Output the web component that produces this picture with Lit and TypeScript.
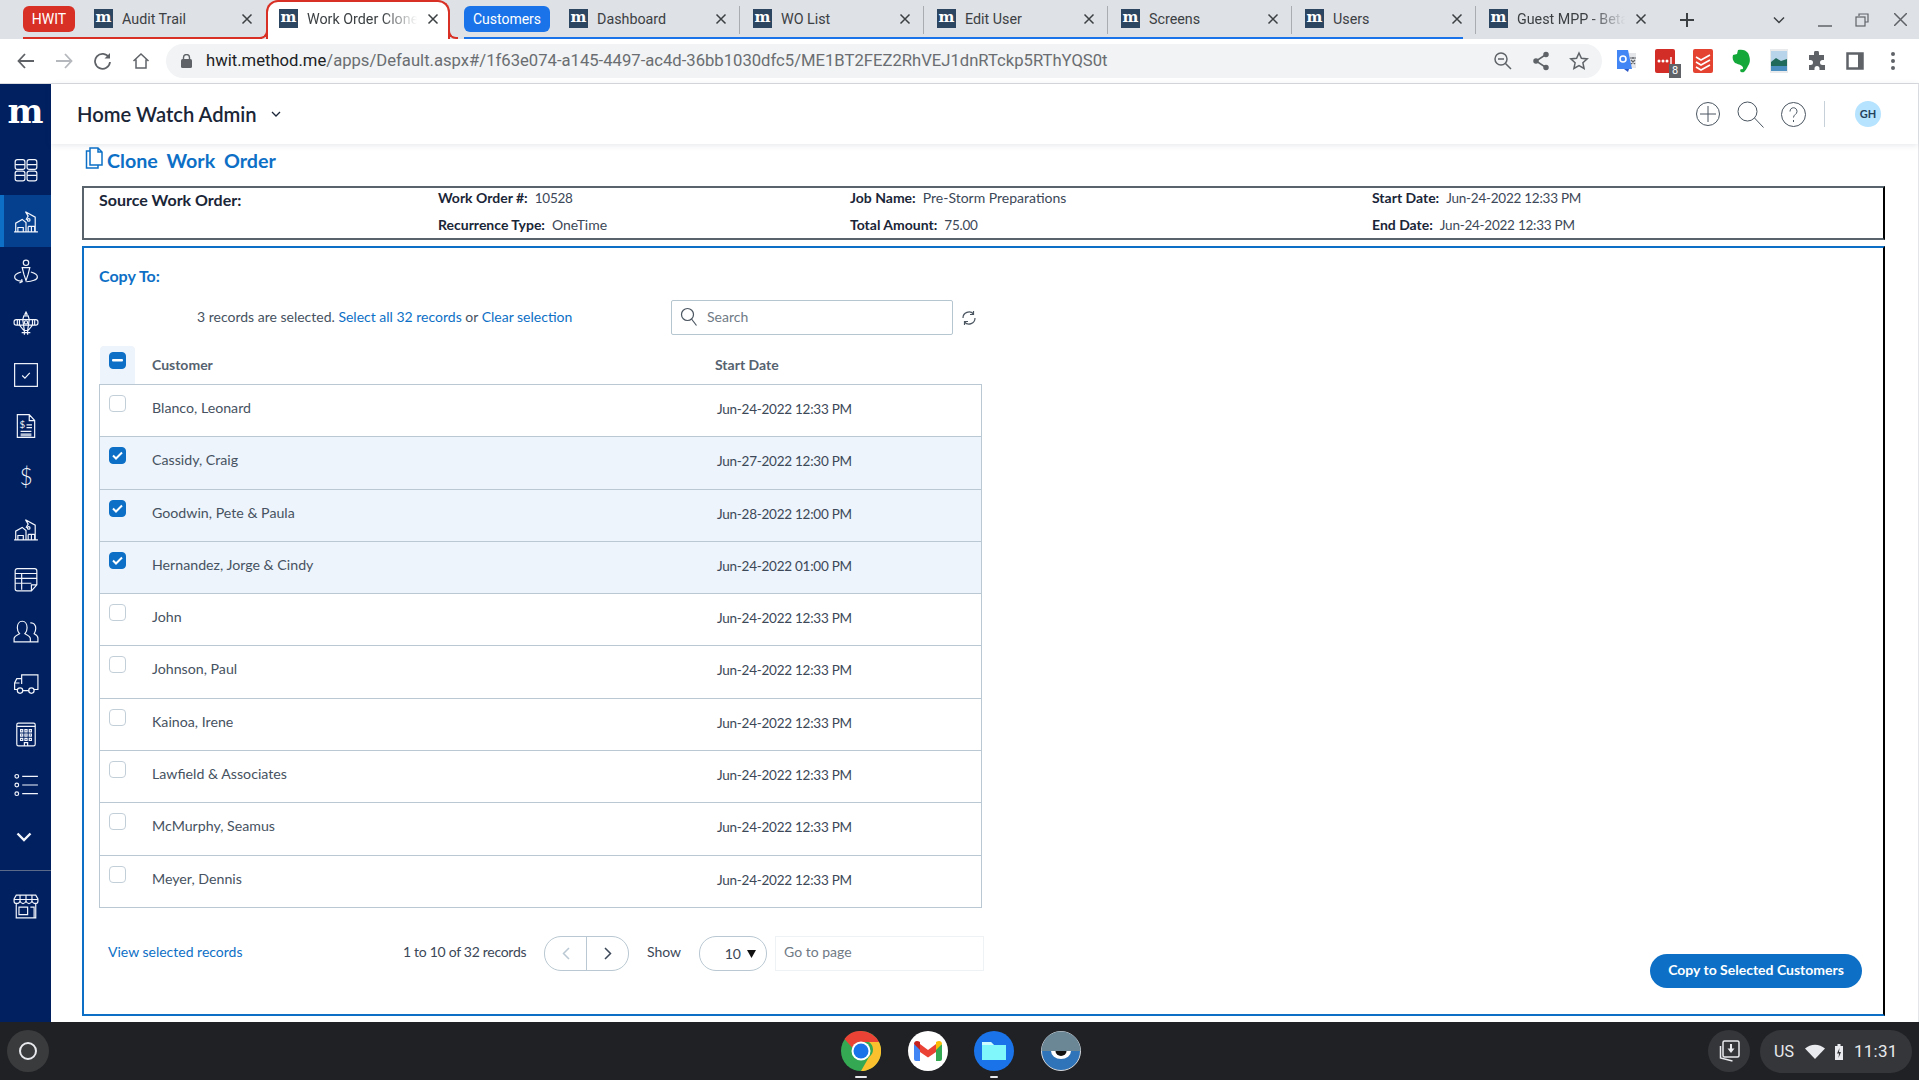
import { LitElement, html, css, svg } from 'lit';
import { customElement } from 'lit/decorators.js';
import { classMap } from 'lit/directives/class-map.js';

const navIcons = [
  svg`<rect x="2" y="2.500" width="9" height="9" rx="2"/><rect x="13" y="2.500" width="9" height="9" rx="2"/><rect x="2" y="13" width="9" height="9" rx="2"/><rect x="13" y="13" width="9" height="9" rx="2"/><path d="M2 7h9M13 7h9M2 17h9M13 17h9"/>`,
  svg`<path d="M1 22h22M2.500 22v-8l6-3.500 3.500 3v8.500M12 11l2-3.500-2.500-4 9 5v13.500M4.500 22v-4h5v4M14 17h6M14 22v-5M17 22v-5M20 22v-5"/><circle cx="14.500" cy="11" r="1.200"/>`,
  svg`<circle cx="12" cy="3.500" r="2.500"/><path d="M8.500 8h7l-1.500 6-2 6-2-6zM7.500 12c-3.500 1-6 2.500-6 4.500 0 2 3 3.500 6.500 4M16.500 12c3.500 1 6 2.500 6 4.500 0 2.500-5 4.500-10 4.500M8 18.500l.500 2.500-2.500 1"/>`,
  svg`<path d="M12 1l1 2h-2zM9.500 4.500h5M3 8h18a2 2 0 0 1 2 2v1a2 2 0 0 1-2 2H3a2 2 0 0 1-2-2v-1a2 2 0 0 1 2-2zM10 4.500h4l1 3.500-1.500 10h-3L9 8zM6 8v5M18 8v5M4 8.500v4M20 8.500v4M8 20h8M10.500 18v4M13.500 18v4M6 13l4 5M18 13l-4 5"/><circle cx="12" cy="10.500" r="1.500"/>`,
  svg`<rect x="1.500" y="1.500" width="21" height="21"/><path d="M8.500 12.500l2.500 2.500 4.500-5"/>`,
  svg`<path d="M4 1.500h11l5 5.500v15.500H4zM15 1.500V7h5M7 19.500h10M7 17h10M7 21h10M12.500 11h5M12.500 13.500h5"/><text x="6" y="13.500" class="glyph" font-size="9">$</text>`,
  svg`<text x="12" y="19.500" class="glyph light" font-size="21" text-anchor="middle">$</text>`,
  svg`<path d="M1 22h22M2.500 22v-8l6-3.500 3.500 3v8.500M12 11l2-3.500-2.500-4 9 5v13.500M4.500 22v-4h5v4M14 17h6M14 22v-5M17 22v-5M20 22v-5"/><circle cx="14.500" cy="11" r="1.200"/>`,
  svg`<path d="M2 3.500a2 2 0 0 1 2-2h16a2 2 0 0 1 2 2v13l-5 5.500H4a2 2 0 0 1-2-2zM22 16.500h-5V22M2 6h20M2 10.500h20M2 15h15M8 6v15"/>`,
  svg`<path d="M1 22v-3c0-2 2-3 5-4.500-1.500-1.500-2-3-2-5.500 0-3 1.500-6 4.500-6S13 6 13 9c0 2.500-.500 4-2 5.500 3 1.500 5 2.500 5 4.500v3zM16 4.500c3-.500 5 2 5 5 0 2-.500 3.500-1.500 5 2 1 3.500 2 3.500 4v3.500h-7"/>`,
  svg`<path d="M8 13V4.500h15V18h-4M8 8H3.500L1.500 12v6h2.500M1.500 12H6M9 19h6"/><circle cx="6.500" cy="19" r="2.500"/><circle cx="17" cy="19" r="2.500"/>`,
  svg`<rect x="3.500" y="2" width="17" height="21" rx="1.500"/><path d="M3.500 5h17M7 8h2v2H7zM11 8h2v2h-2zM15 8h2v2h-2zM7 12h2v2H7zM11 12h2v2h-2zM15 12h2v2h-2zM7 16h2v2H7zM11 16h2v2h-2zM15 16h2v2h-2zM10.500 23v-3h3v3"/>`,
  svg`<circle cx="3.500" cy="4" r="1.700"/><circle cx="3.500" cy="12" r="1.700"/><circle cx="3.500" cy="20" r="1.700"/><path d="M8.500 4H23M8.500 12H23M8.500 20H23"/>`,
];

const storeIcon = svg`<path d="M3 9v14h18V9M1 5.500l2-3.500h18l2 3.500v2c0 3-4.400 3-5.500 0-1 3-4.500 3-5.500 0-1 3-4.500 3-5.500 0-1 3-5.500 3-5.500 0zM1 6h22M6.500 2v5.500M12 2v5.500M17.500 2v5.500M5.500 13h8v7h-8zM16 13h3.500v10H16"/>`;

const tabsLeft = [{ title: 'Audit Trail' }];
const tabsRight = [
  { title: 'Dashboard', first: true },
  { title: 'WO List' },
  { title: 'Edit User' },
  { title: 'Screens' },
  { title: 'Users' },
];

const rows = [
  { name: 'Blanco, Leonard', date: 'Jun-24-2022 12:33 PM', on: false },
  { name: 'Cassidy, Craig', date: 'Jun-27-2022 12:30 PM', on: true },
  { name: 'Goodwin, Pete & Paula', date: 'Jun-28-2022 12:00 PM', on: true },
  { name: 'Hernandez, Jorge & Cindy', date: 'Jun-24-2022 01:00 PM', on: true },
  { name: 'John', date: 'Jun-24-2022 12:33 PM', on: false },
  { name: 'Johnson, Paul', date: 'Jun-24-2022 12:33 PM', on: false },
  { name: 'Kainoa, Irene', date: 'Jun-24-2022 12:33 PM', on: false },
  { name: 'Lawfield & Associates', date: 'Jun-24-2022 12:33 PM', on: false },
  { name: 'McMurphy, Seamus', date: 'Jun-24-2022 12:33 PM', on: false },
  { name: 'Meyer, Dennis', date: 'Jun-24-2022 12:33 PM', on: false },
];

@customElement('app-root')
export class AppRoot extends LitElement {
  static styles = css`
    :host {
      display: flex;
      flex-direction: column;
      width: 1919px;
      height: 1080px;
      overflow: hidden;
      background: #fff;
      font-family: 'Lato', 'Noto Sans', sans-serif;
      color: #465261;
    }
    svg { display: block; flex: none; }
    .nums { letter-spacing: -0.25px; font-size: 13.5px; }

    /* browser chrome */
    .strip {
      display: flex;
      height: 39px;
      flex: none;
      background: #dee1e6;
      padding-left: 23px;
      font-family: 'Roboto', sans-serif;
      font-size: 14.3px;
      color: #3c4043;
    }
    .group { display: flex; position: relative; }
    .group::after {
      content: '';
      position: absolute;
      left: 0;
      right: 0;
      bottom: 0;
      height: 2px;
    }
    .group.red::after { background: #d93025; right: 4px; }
    .group.blue { margin-left: 14px; }
    .group.blue::after { background: #1a73e8; right: 12px; }
    .badge {
      align-self: flex-start;
      margin-top: 6px;
      height: 26px;
      line-height: 26px;
      border-radius: 6px;
      color: #fff;
      text-align: center;
      font-size: 14px;
      flex: none;
    }
    .badge.red { width: 52px; background: #d93025; }
    .badge.blue { width: 86px; background: #1a73e8; }
    .tab {
      display: flex;
      align-items: center;
      height: 39px;
      width: 184px;
      padding: 0 0 2px 14px;
      box-sizing: border-box;
      position: relative;
      flex: none;
    }
    .tab.sep::before {
      content: '';
      position: absolute;
      left: 0;
      top: 6px;
      height: 28px;
      width: 1px;
      background: #a9acb0;
    }
    .tab.audit { width: 191px; padding-left: 19px; }
    .tab.dash { width: 189px; padding-left: 19px; }
    .tab.active {
      width: 184px;
      padding-left: 11px;
      padding-bottom: 4px;
      background: #fff;
      border: 2px solid #d93025;
      border-bottom: none;
      border-radius: 12px 12px 0 0;
    }
    .tab.active::before, .tab.active::after {
      content: '';
      position: absolute;
      bottom: 0;
      width: 8px;
      height: 8px;
      background: #dee1e6;
      border-bottom: 2px solid #d93025;
    }
    .tab.active::before { left: -10px; border-right: 2px solid #d93025; border-bottom-right-radius: 8px; }
    .tab.active::after { right: -10px; border-left: 2px solid #d93025; border-bottom-left-radius: 8px; }
    .fav {
      width: 19px;
      height: 19px;
      flex: none;
      background: #2c4560;
      color: #fff;
      font: 700 15px/17px 'DejaVu Serif', serif;
      text-align: center;
      overflow: hidden;
    }
    .tab-label {
      margin-left: 9px;
      flex: 1;
      white-space: nowrap;
      overflow: hidden;
    }
    .fade {
      -webkit-mask-image: linear-gradient(90deg, #000 65%, transparent 95%);
      mask-image: linear-gradient(90deg, #000 65%, transparent 95%);
    }
    .tab-x { margin: 0 12px 0 4px; }
    .audit .tab-x { margin-right: 13px; }
    .active .tab-x { margin-right: 9px; }
    .plus { margin-left: 21px; align-self: center; }
    .winctl {
      margin-left: auto;
      display: flex;
      align-items: center;
      padding-right: 12px;
    }
    .w-chev { margin-right: 33px; }
    .w-min { margin-right: 23px; }
    .w-max { margin-right: 25px; }
    .toolbar {
      display: flex;
      align-items: center;
      height: 44px;
      flex: none;
      border-bottom: 1px solid #dadce0;
      box-sizing: content-box;
      padding-left: 16px;
    }
    .nav-btns { display: flex; gap: 18px; align-items: center; margin-top: -1px; }
    .nav-btns .nudge { margin-left: 1px; }
    .omni {
      margin-left: 16px;
      width: 1436px;
      height: 34px;
      border-radius: 17px;
      background: #f1f3f4;
      display: flex;
      align-items: center;
      box-sizing: border-box;
      padding: 0 13px 0 15px;
      font: 16.65px 'Roboto', sans-serif;
      color: #6a6d71;
      white-space: nowrap;
    }
    .omni b { font-weight: 400; color: #202124; }
    .omni .url { margin: -2px 0 0 14px; flex: 1; }
    .omni-icons { display: flex; gap: 19px; align-items: center; }
    .ext { display: flex; align-items: center; margin-left: 6px; }
    .ext-cell { width: 38px; display: flex; justify-content: center; position: relative; }
    .ext-badge {
      position: absolute;
      right: 3px;
      bottom: -5px;
      width: 12px;
      height: 14px;
      background: #5f6368;
      color: #fff;
      font: 11px/14px 'Roboto', sans-serif;
      text-align: center;
    }

    /* app */
    .body { flex: 1; display: flex; min-height: 0; border-right: 1px solid #e3e5e8; }
    .side {
      width: 51px;
      flex: none;
      background: #002060;
      display: flex;
      flex-direction: column;
    }
    .logo {
      height: 60px;
      color: #fff;
      font: 700 34px/54px 'DejaVu Serif', serif;
      text-align: center;
      overflow: hidden;
      flex: none;
    }
    .nav { height: 51.3px; flex: none; display: flex; align-items: center; justify-content: center; }
    .nav svg { stroke: #f2f5fb; stroke-width: 1.1; fill: none; }
    .nav .glyph { fill: #f2f5fb; stroke: none; font-family: 'Lato', sans-serif; }
    .nav .light { font-weight: 300; }
    .nav.active { background: #05408f; box-shadow: inset 4px 0 0 #0d70c6; }
    .nav .chev { stroke-width: 2.4; margin-right: 4px; }
    .rule { height: 1px; background: #5a6a88; margin-top: 8px; flex: none; }
    .side .store { margin-top: 9px; }

    .main { flex: 1; display: flex; flex-direction: column; min-width: 0; }
    .head {
      height: 60px;
      flex: none;
      display: flex;
      align-items: center;
      padding-left: 26px;
      box-shadow: 0 1px 6px rgba(30, 50, 80, 0.12);
      color: #1a2638;
    }
    .head h1 { margin: 0; font-size: 20.2px; font-weight: 600; }
    .head .caret { margin-left: 14px; }
    .head-tools { margin-left: auto; display: flex; align-items: center; }
    .head-tools svg { margin-right: 17px; stroke: #4a5560; fill: none; }
    .head-tools .help { margin-right: 17px; }
    .head-rule { width: 1px; height: 26px; background: #c6d0d8; margin: 0 30px 0 1px; }
    .avatar {
      width: 26px;
      height: 26px;
      border-radius: 50%;
      background: #b6e3ff;
      color: #23415c;
      font-size: 11px;
      font-weight: 700;
      line-height: 26px;
      text-align: center;
      margin-right: 37px;
    }
    .content { flex: 1; display: flex; flex-direction: column; padding: 0 33px 6px 31px; min-height: 0; }
    .title {
      height: 42px;
      flex: none;
      display: flex;
      align-items: center;
      padding: 0 0 10px 3px;
      box-sizing: border-box;
      color: #0d70c6;
      font-size: 19.7px;
      font-weight: 700;
      word-spacing: 4px;
      gap: 4px;
    }
    .title svg { margin-top: -4px; }
    .source {
      height: 54px;
      flex: none;
      box-sizing: border-box;
      border: 2px solid #59636b;
      border-right-color: #000;
      display: grid;
      grid-template-columns: 339px 412px 522px 1fr;
      grid-template-rows: 27px 27px;
      padding-left: 15px;
      font-size: 14px;
      color: #3c4858;
      white-space: nowrap;
    }
    .source .lead { font-size: 16px; font-weight: 700; color: #1a2638; line-height: 24px; }
    .field { line-height: 20px; }
    .field b { color: #1a2638; font-weight: 700; margin-right: 7px; }
    .copy {
      margin-top: 6px;
      flex: 1;
      min-height: 0;
      box-sizing: border-box;
      border: 2px solid #0d70c6;
      border-right-color: #000;
      padding: 18px 15px 0;
      display: flex;
      flex-direction: column;
    }
    .copy h2 { margin: 0; height: 34px; font-size: 16px; font-weight: 700; color: #0d70c6; line-height: 20px; }
    .tools { display: flex; align-items: center; height: 35px; flex: none; font-size: 14px; }
    .tools .msg { margin: -2px 0 0 98px; width: 474px; white-space: nowrap; }
    a { color: #0d70c6; text-decoration: none; }
    .search {
      width: 282px;
      height: 35px;
      box-sizing: border-box;
      border: 1px solid #b6c6d0;
      border-radius: 2px;
      display: flex;
      align-items: center;
      padding: 0 0 2px 8px;
      gap: 9px;
      color: #6f7a85;
    }
    .refresh { margin-left: 8px; }
    .thead { margin-top: 11px; height: 38px; display: flex; flex: none; font-size: 14px; font-weight: 700; color: #566270; }
    .thead .box-cell {
      width: 35px;
      margin-left: 1px;
      background: #eef4fb;
      border-radius: 4px 4px 0 0;
      box-sizing: border-box;
      padding: 6px 0 0 9px;
    }
    .thead .c1 { margin-left: 17px; width: 563px; line-height: 38px; }
    .thead .c2 { line-height: 38px; }
    .table {
      height: 524px;
      flex: none;
      box-sizing: border-box;
      width: 883px;
      border: 1px solid #b9c8d2;
      border-bottom: none;
      display: flex;
      flex-direction: column;
      font-size: 14.2px;
    }
    .row {
      flex: 1;
      display: flex;
      border-bottom: 1px solid #b9c8d2;
      box-sizing: border-box;
      padding-left: 9px;
    }
    .row.on { background: #edf4fb; }
    .check {
      width: 17px;
      height: 17px;
      box-sizing: border-box;
      border-radius: 4px;
      border: 1px solid #c3cfd8;
      background: #fff;
      display: flex;
      align-items: center;
      justify-content: center;
      flex: none;
    }
    .check.on { background: #0d70c6; border-color: #0d70c6; }
    .row .check { margin-top: 10px; }
    .row .name { margin-left: 26px; width: 565px; line-height: 45px; color: #465261; }
    .row .date { line-height: 48px; color: #3c4858; }
    .foot { display: flex; align-items: flex-start; flex: none; margin-top: 28px; font-size: 14px; white-space: nowrap; }
    .foot > a { margin-left: 9px; width: 295px; line-height: 32px; }
    .foot .count { width: 141px; line-height: 32px; color: #3c4858; letter-spacing: -0.29px; }
    .pager {
      width: 85px;
      height: 35px;
      box-sizing: border-box;
      border: 1px solid #b9c8d2;
      border-radius: 17px;
      display: flex;
    }
    .pager span { flex: 1; display: flex; align-items: center; justify-content: center; }
    .pager span + span { border-left: 1px solid #b9c8d2; }
    .show { margin-left: 18px; width: 52px; line-height: 32px; color: #3c4858; }
    .select {
      width: 68px;
      height: 35px;
      box-sizing: border-box;
      border: 1px solid #b9c8d2;
      border-radius: 17px;
      display: flex;
      align-items: center;
      justify-content: flex-end;
      gap: 6px;
      padding-right: 10px;
      color: #3c4858;
    }
    .goto {
      margin-left: 8px;
      width: 209px;
      height: 35px;
      box-sizing: border-box;
      border: 1px solid #eef2f5;
      line-height: 30px;
      padding-left: 8px;
      color: #6f7a85;
    }
    .cta {
      margin: 18px 6px 0 auto;
      width: 212px;
      height: 34px;
      border-radius: 17px;
      background: #0d70c6;
      color: #fff;
      font-weight: 700;
      font-size: 14px;
      line-height: 32px;
      text-align: center;
    }

    /* shelf */
    .shelf {
      height: 58px;
      flex: none;
      background: #202124;
      display: flex;
      align-items: center;
      padding-left: 7px;
      font-family: 'Roboto', sans-serif;
      color: #e8eaed;
    }
    .launcher {
      width: 42px;
      height: 42px;
      border-radius: 50%;
      background: #3a3b3d;
      display: flex;
      align-items: center;
      justify-content: center;
    }
    .launcher i { display: block; width: 18px; height: 18px; box-sizing: border-box; border: 2px solid #e8eaed; border-radius: 50%; }
    .apps { margin-left: 792px; display: flex; gap: 26.6px; }
    .app { position: relative; width: 40px; height: 40px; }
    .app i {
      position: absolute;
      left: 50%;
      bottom: -7px;
      height: 2px;
      border-radius: 1px;
      background: #e8eaed;
      transform: translateX(-50%);
    }
    .app i.long { width: 12px; }
    .app i.short { width: 8px; }
    .tray { margin-left: auto; display: flex; align-items: center; gap: 10px; padding-right: 7px; }
    .bubble {
      width: 42px;
      height: 42px;
      border-radius: 50%;
      background: #35363a;
      display: flex;
      align-items: center;
      justify-content: center;
    }
    .pill {
      width: 152px;
      height: 43px;
      border-radius: 22px;
      background: #35363a;
      display: flex;
      align-items: center;
      box-sizing: border-box;
      padding-left: 14px;
      font-size: 16px;
    }
    .pill .time { margin-left: 10px; font-size: 17px; letter-spacing: 0.3px; }
    .pill .wifi { margin-left: 11px; }
    .pill .batt { margin-left: 9px; }
  `;

  private closeIcon() {
    return html`<svg class="tab-x" width="12" height="12" viewBox="0 0 12 12" fill="none" stroke="#3c4043" stroke-width="1.500"><path d="M1.500 1.500l9 9M10.500 1.500l-9 9"/></svg>`;
  }

  private tab(title: string, cls: Record<string, boolean>, fade = false) {
    return html`<div class=${classMap({ tab: true, ...cls })}>
      <span class="fav">m</span>
      <span class=${classMap({ 'tab-label': true, fade })}>${title}</span>
      ${this.closeIcon()}
    </div>`;
  }

  private renderStrip() {
    return html`<div class="strip">
      <div class="group red">
        <div class="badge red">HWIT</div>
        ${tabsLeft.map((t) => this.tab(t.title, { audit: true }))}
      </div>
      ${this.tab('Work Order Clone', { active: true }, true)}
      <div class="group blue">
        <div class="badge blue">Customers</div>
        ${tabsRight.map((t, i) => this.tab(t.title, { dash: !!t.first, sep: i > 0 }))}
      </div>
      ${this.tab('Guest MPP - Beta', { sep: true }, true)}
      <svg class="plus" width="14" height="14" viewBox="0 0 14 14" stroke="#3c4043" stroke-width="2"><path d="M7 0v14M0 7h14"/></svg>
      <div class="winctl">
        <svg class="w-chev" width="12" height="8" viewBox="0 0 12 8" fill="none" stroke="#3c4043" stroke-width="1.500"><path d="M1 1.500l5 5 5-5"/></svg>
        <svg class="w-min" width="14" height="14" viewBox="0 0 14 14" stroke="#5f6368" stroke-width="1.500"><path d="M0 13h14"/></svg>
        <svg class="w-max" width="14" height="14" viewBox="0 0 14 14" fill="none" stroke="#5f6368" stroke-width="1.200"><path d="M4 3V1h9v8h-3"/><rect x="1" y="4" width="9" height="9"/></svg>
        <svg width="13" height="13" viewBox="0 0 13 13" stroke="#5f6368" stroke-width="1.500"><path d="M0 0l13 13M13 0L0 13"/></svg>
      </div>
    </div>`;
  }

  private renderToolbar() {
    return html`<div class="toolbar">
      <div class="nav-btns">
        <svg width="20" height="18" viewBox="0 0 20 18" fill="none" stroke="#5f6368" stroke-width="1.800"><path d="M18 9H3M9 2L2.500 9 9 16"/></svg>
        <svg width="20" height="18" viewBox="0 0 20 18" fill="none" stroke="#b5b8bc" stroke-width="1.800"><path d="M2 9h15M11 2l6.500 7-6.500 7"/></svg>
        <svg class="nudge" width="20" height="18" viewBox="0 0 20 18" fill="none" stroke="#5f6368" stroke-width="1.800"><path d="M16 5.500A7.500 7.500 0 1 0 17 10"/><path d="M17 1v5.500h-5.500" fill="#5f6368" stroke="none"/></svg>
        <svg class="nudge" width="18" height="18" viewBox="0 0 18 18" fill="none" stroke="#5f6368" stroke-width="1.500"><path d="M1.500 9L9 2l7.500 7M4 7.500V16h10V7.500"/></svg>
      </div>
      <div class="omni">
        <svg width="11" height="14" viewBox="0 0 11 14" fill="#5f6368"><rect x="0" y="5" width="11" height="9" rx="1.500"/><path d="M2.500 5V3.500a3 3 0 0 1 6 0V5" fill="none" stroke="#5f6368" stroke-width="1.400"/></svg>
        <span class="url"><b>hwit.method.me</b>/apps/Default.aspx#/1f63e074-a145-4497-ac4d-36bb1030dfc5/ME1BT2FEZ2RhVEJ1dnRTckp5RThYQS0t</span>
        <div class="omni-icons">
          <svg width="20" height="20" viewBox="0 0 20 20" fill="none" stroke="#5f6368" stroke-width="1.500"><circle cx="8" cy="8" r="6"/><path d="M5 8h6M12.500 12.500L18 18"/></svg>
          <svg width="18" height="20" viewBox="0 0 18 20" fill="#5f6368" stroke="#5f6368" stroke-width="1.500"><path d="M14 3.500L4 10l10 6.500" fill="none"/><circle cx="14" cy="3.500" r="2"/><circle cx="4" cy="10" r="2"/><circle cx="14" cy="16.500" r="2"/></svg>
          <svg width="20" height="20" viewBox="0 0 20 20" fill="none" stroke="#5f6368" stroke-width="1.500"><path d="M10 2l2.400 5.300 5.800.6-4.300 3.900 1.200 5.700L10 14.600l-5.100 2.900 1.200-5.700L1.800 7.900l5.800-.6z"/></svg>
        </div>
      </div>
      <div class="ext">
        <div class="ext-cell"><svg width="22" height="24" viewBox="0 0 22 24"><path d="M9 4h11v15H9z" fill="#e4e6e9"/><path d="M1 1h11l4 19H1z" fill="#4285f4"/><path d="M8 20l4 3 1-3z" fill="#2a56c6"/><path d="M14 9h6M17 8v2M15 15l4-4M15 11l4 4" stroke="#5f6368" stroke-width="1.200"/><circle cx="7" cy="10" r="3" fill="none" stroke="#fff" stroke-width="1.600"/></svg></div>
        <div class="ext-cell">
          <svg width="20" height="24" viewBox="0 0 20 24"><rect width="20" height="24" rx="2" fill="#d32d27"/><circle cx="4" cy="12" r="1.500" fill="#fff"/><circle cx="8" cy="12" r="1.500" fill="#fff"/><circle cx="12" cy="12" r="1.500" fill="#fff"/><path d="M16 8v8" stroke="#fff" stroke-width="1.400"/></svg>
          <span class="ext-badge">8</span>
        </div>
        <div class="ext-cell"><svg width="20" height="24" viewBox="0 0 20 24"><rect width="20" height="24" rx="2" fill="#e44332"/><path d="M3 8l5 3 9-5M3 13l5 3 9-5M3 18l5 3 9-5" fill="none" stroke="#fff" stroke-width="1.600"/></svg></div>
        <div class="ext-cell"><svg width="19" height="24" viewBox="0 0 19 24"><path d="M6 1c4-1 8 0 10 3 2 4 3 9 0 13-1 2-2 4-4 6-3 1-5-1-3-3 2 1 3-1 1-3-3-2-5-2-7-3C1 12 0 9 1 6l4-1z" fill="#14a83b"/></svg></div>
        <div class="ext-cell"><svg width="18" height="24" viewBox="0 0 18 24"><rect width="18" height="24" fill="#e8eaec"/><rect x="1" y="2" width="16" height="11" fill="#b8d4ea"/><path d="M1 13l5-4 5 3 6-2v7H1z" fill="#1f6a5a"/><rect x="1" y="17" width="16" height="5" fill="#4a8fc0"/></svg></div>
        <div class="ext-cell"><svg width="20" height="20" viewBox="0 0 20 20" fill="#5f6368"><path d="M7 1a2.500 2.500 0 0 1 5 0v2h5v5h-1.500a2.500 2.500 0 0 0 0 5H18v5h-5.500v-1.500a2.500 2.500 0 0 0-5 0V18H2v-5h1.500a2.500 2.500 0 0 0 0-5H2V3h5z" transform="translate(0 1)"/></svg></div>
        <div class="ext-cell"><svg width="18" height="18" viewBox="0 0 18 18" fill="none" stroke="#5f6368" stroke-width="2.500"><rect x="1.500" y="1.500" width="15" height="15"/><path d="M14 1v16" stroke-width="4"/></svg></div>
        <div class="ext-cell"><svg width="4" height="18" viewBox="0 0 4 18" fill="#5f6368"><circle cx="2" cy="2" r="2"/><circle cx="2" cy="9" r="2"/><circle cx="2" cy="16" r="2"/></svg></div>
      </div>
    </div>`;
  }

  private renderSide() {
    return html`<aside class="side">
      <div class="logo">m</div>
      ${navIcons.map(
        (icon, i) => html`<div class=${classMap({ nav: true, active: i === 1 })}>
          <svg width="26" height="26" viewBox="0 0 24 24">${icon}</svg>
        </div>`,
      )}
      <div class="nav">
        <svg class="chev" width="16" height="10" viewBox="0 0 16 10"><path d="M1.500 1.500L8 8l6.500-6.500"/></svg>
      </div>
      <div class="rule"></div>
      <div class="nav store"><svg width="26" height="26" viewBox="0 0 24 24">${storeIcon}</svg></div>
    </aside>`;
  }

  private renderHead() {
    return html`<header class="head">
      <h1>Home Watch Admin</h1>
      <svg class="caret" width="10" height="7" viewBox="0 0 10 7" fill="none" stroke="#1a2638" stroke-width="1.300"><path d="M1 1l4 4 4-4"/></svg>
      <div class="head-tools">
        <svg width="24" height="24" viewBox="0 0 24 24" stroke-width="1"><circle cx="12" cy="12" r="11.500"/><path d="M12 4v16M4 12h16"/></svg>
        <svg width="27" height="27" viewBox="0 0 27 27" stroke-width="1"><circle cx="10.500" cy="10.500" r="9.500"/><path d="M17.500 17l9 9.500"/></svg>
        <svg class="help" width="25" height="25" viewBox="0 0 25 25" stroke-width="1"><circle cx="12.500" cy="12.500" r="12"/><path d="M9 9.500c0-5 7-5 7 0 0 3-3.500 3-3.500 6M12.500 18v2"/></svg>
        <span class="head-rule"></span>
        <span class="avatar">GH</span>
      </div>
    </header>`;
  }

  private renderSource() {
    return html`<section class="source">
      <div class="lead">Source Work Order:</div>
      <div class="field"><b>Work Order #:</b><span class="nums">10528</span></div>
      <div class="field"><b>Job Name:</b>Pre-Storm Preparations</div>
      <div class="field"><b>Start Date:</b><span class="nums">Jun-24-2022 12:33 PM</span></div>
      <div></div>
      <div class="field"><b>Recurrence Type:</b>OneTime</div>
      <div class="field"><b>Total Amount:</b><span class="nums">75.00</span></div>
      <div class="field"><b>End Date:</b><span class="nums">Jun-24-2022 12:33 PM</span></div>
    </section>`;
  }

  private renderCheck(on: boolean) {
    return html`<span class=${classMap({ check: true, on })}>
      ${on
        ? html`<svg width="11" height="9" viewBox="0 0 11 9" fill="none" stroke="#fff" stroke-width="2"><path d="M1 4.500L4 7.500 10 1.500"/></svg>`
        : ''}
    </span>`;
  }

  private renderCopy() {
    return html`<section class="copy">
      <h2>Copy To:</h2>
      <div class="tools">
        <div class="msg">3 records are selected. <a>Select all 32 records</a> or <a>Clear selection</a></div>
        <div class="search">
          <svg width="18" height="20" viewBox="0 0 18 20" fill="none" stroke="#4a5560" stroke-width="1.200"><circle cx="7.500" cy="7.500" r="6"/><path d="M11.500 12l5 6.500"/></svg>
          Search
        </div>
        <svg class="refresh" width="16" height="16" viewBox="0 0 16 16" fill="none" stroke="#4a5560" stroke-width="1.200"><path d="M2 8a6 6 0 0 1 10.500-4M14 8a6 6 0 0 1-10.500 4M12.500 1v3.500H9M3.500 15v-3.500H7"/></svg>
      </div>
      <div class="thead">
        <div class="box-cell">
          <span class="check on"><svg width="11" height="3" viewBox="0 0 11 3"><rect width="11" height="2.500" rx="1" fill="#fff"/></svg></span>
        </div>
        <div class="c1">Customer</div>
        <div class="c2">Start Date</div>
      </div>
      <div class="table">
        ${rows.map(
          (r) => html`<div class=${classMap({ row: true, on: r.on })}>
            ${this.renderCheck(r.on)}
            <div class="name">${r.name}</div>
            <div class="date nums">${r.date}</div>
          </div>`,
        )}
      </div>
      <div class="foot">
        <a>View selected records</a>
        <div class="count">1 to 10 of 32 records</div>
        <div class="pager">
          <span><svg width="8" height="13" viewBox="0 0 8 13" fill="none" stroke="#b9c8d2" stroke-width="1.500"><path d="M7 1L1.500 6.500 7 12"/></svg></span>
          <span><svg width="8" height="13" viewBox="0 0 8 13" fill="none" stroke="#3c4858" stroke-width="1.500"><path d="M1 1l5.500 5.500L1 12"/></svg></span>
        </div>
        <div class="show">Show</div>
        <div class="select">10 <svg width="9" height="8" viewBox="0 0 9 8" fill="#111"><path d="M0 0h9L4.500 8z"/></svg></div>
        <div class="goto">Go to page</div>
        <div class="cta">Copy to Selected Customers</div>
      </div>
    </section>`;
  }

  private renderShelf() {
    return html`<footer class="shelf">
      <div class="launcher"><i></i></div>
      <div class="apps">
        <div class="app">
          <svg width="40" height="40" viewBox="0 0 40 40">
            <circle cx="20" cy="20" r="20" fill="#34a853"/>
            <path d="M20 0a20 20 0 0 1 18 11H20a9 9 0 0 0-8.500 6L3.500 8A20 20 0 0 1 20 0z" fill="#ea4335"/>
            <path d="M38 11a20 20 0 0 1-18 29l8-14a9 9 0 0 0 0-15z" fill="#fbc02d"/>
            <circle cx="20" cy="20" r="9.500" fill="#fff"/><circle cx="20" cy="20" r="7.500" fill="#1a73e8"/>
          </svg>
          <i class="long"></i>
        </div>
        <div class="app">
          <svg width="40" height="40" viewBox="0 0 40 40">
            <circle cx="20" cy="20" r="20" fill="#fff"/>
            <path d="M6 13v15a2 2 0 0 0 2 2h4V17z" fill="#4285f4"/>
            <path d="M28 17v13h4a2 2 0 0 0 2-2V13z" fill="#34a853"/>
            <path d="M12 23V15l8 6 8-6v8l-8 5.500z" fill="#ea4335" transform="translate(0 -2)"/>
            <path d="M6 13c0-3 3-4 6-2v8z" fill="#c5221f"/>
            <path d="M28 11c3-2 6-1 6 2l-6 6z" fill="#fbbc04"/>
          </svg>
        </div>
        <div class="app">
          <svg width="40" height="40" viewBox="0 0 40 40">
            <circle cx="20" cy="20" r="20" fill="#1a73e8"/>
            <path d="M8 11h9l3 3h12v15H8z" fill="#80f7fb"/>
            <path d="M8 11h9l3 3H8z" fill="#fff" opacity=".6"/>
          </svg>
          <i class="short"></i>
        </div>
        <div class="app">
          <svg width="40" height="40" viewBox="0 0 40 40">
            <circle cx="20" cy="20" r="19.500" fill="#2f74b8" stroke="#d8dadc"/>
            <path d="M.5 20a19.500 19.500 0 0 1 39 0z" fill="#6b8796"/>
            <path d="M10 20h20a10 8 0 0 1-20 0z" fill="#fff"/>
            <path d="M14.500 20h11a5.500 5 0 0 1-11 0z" fill="#111"/>
          </svg>
        </div>
      </div>
      <div class="tray">
        <div class="bubble">
          <svg width="22" height="22" viewBox="0 0 22 22" fill="none" stroke="#e8eaed" stroke-width="1.500"><rect x="5" y="1" width="16" height="16" rx="1.500"/><path d="M2.500 6v12l12 3"/><path d="M13 4v6" stroke-width="2"/><path d="M9.500 8.500h7L13 13z" fill="#e8eaed" stroke="none"/></svg>
        </div>
        <div class="pill">
          US
          <svg class="wifi" width="20" height="15" viewBox="0 0 20 15" fill="#e8eaed"><path d="M0 4.500a15 15 0 0 1 20 0L10 15z"/></svg>
          <svg class="batt" width="10" height="17" viewBox="0 0 10 17" fill="#e8eaed"><path d="M1 3h2.500V1h3v2H9v14H1z"/><path d="M5.500 5L3 10.500h2L4.500 15 7 9H5z" fill="#35363a"/></svg>
          <span class="time">11:31</span>
        </div>
      </div>
    </footer>`;
  }

  render() {
    return html`
      ${this.renderStrip()}
      ${this.renderToolbar()}
      <div class="body">
        ${this.renderSide()}
        <div class="main">
          ${this.renderHead()}
          <div class="content">
            <div class="title">
              <svg width="18" height="22" viewBox="0 0 18 22" fill="none" stroke="#0d70c6" stroke-width="1.500"><path d="M5 1h8l4 4v13H5zM13 1v4h4"/><path d="M5 4H1.500v17H13v-3" /></svg>
              Clone Work Order
            </div>
            ${this.renderSource()}
            ${this.renderCopy()}
          </div>
        </div>
      </div>
      ${this.renderShelf()}
    `;
  }
}
